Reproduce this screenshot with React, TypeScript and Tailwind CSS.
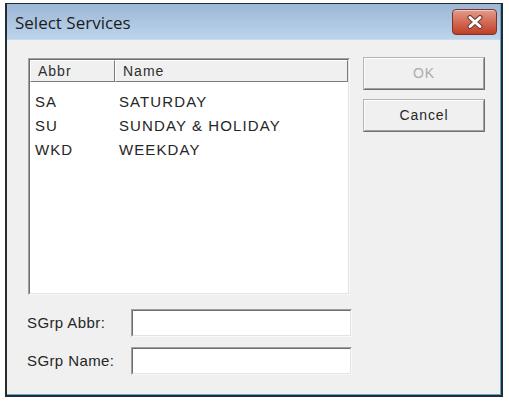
import React from 'react';

type Service = { abbr: string; name: string };

const services: Service[] = [
  { abbr: 'SA', name: 'SATURDAY' },
  { abbr: 'SU', name: 'SUNDAY & HOLIDAY' },
  { abbr: 'WKD', name: 'WEEKDAY' },
];

const classicFont = { fontFamily: '"Liberation Sans", Arial, sans-serif' };

function CloseGlyph() {
  return (
    <svg width="18" height="14" viewBox="0 0 18 14">
      <path d="M4 2.5 L14 11.5 M14 2.5 L4 11.5" stroke="#6b3a33" strokeWidth="5" strokeLinecap="round" />
      <path d="M4 2.5 L14 11.5 M14 2.5 L4 11.5" stroke="#ffffff" strokeWidth="3" strokeLinecap="round" />
    </svg>
  );
}

function DialogButton({ label, disabled }: { label: string; disabled?: boolean }) {
  return (
    <div className="w-[122px] h-[33px] border border-t-[#b4b4b4] border-l-[#b4b4b4] border-r-[#707070] border-b-[#707070] bg-[#f0f0f0]">
      <div className="w-full h-full border border-t-white border-l-white border-r-[#a0a0a0] border-b-[#a0a0a0] flex items-center justify-center">
        <span className={`text-[14px] tracking-[0.9px] ${disabled ? 'text-[#ababab]' : 'text-[#262626]'}`}>{label}</span>
      </div>
    </div>
  );
}

function TextField() {
  return (
    <div className="w-[221px] h-[28px] border border-t-[#a0a0a0] border-l-[#a0a0a0] border-r-[#f8f8f8] border-b-[#f8f8f8]">
      <div className="w-full h-full bg-white border border-t-[#6e6e6e] border-l-[#6e6e6e] border-r-[#e3e3e3] border-b-[#e3e3e3]" />
    </div>
  );
}

export default function App() {
  return (
    <div className="w-[509px] h-[403px] bg-white pt-[3px] pl-[5px]" style={classicFont}>
      <div className="w-[498px] h-[394px] border-t border-l-2 border-r-2 border-b-2 border-[#262b30]">
        <div className="w-full h-full flex flex-col border-r border-b border-[#58a9cc]">
          {/* title bar */}
          <div className="h-[36px] flex items-start justify-between pr-[3px] bg-gradient-to-b from-[#9bb7d6] to-[#bdd4ec] border-b border-[#c9dbee]">
            <span
              className="pl-[8px] pt-[8px] text-[17px] leading-[21px] text-[#1c1c1c]"
              style={{ fontFamily: '"Open Sans", "Noto Sans", sans-serif' }}
            >
              Select Services
            </span>
            <div className="mt-[5px] w-[45px] h-[26px] rounded-[4px] border border-[#7d3428] bg-gradient-to-b from-[#e39b8d] via-[#d26a55] to-[#c03d26] flex items-center justify-center shadow-[inset_0_1px_0_rgba(255,255,255,0.45)]">
              <CloseGlyph />
            </div>
          </div>

          {/* dialog body */}
          <div className="flex-1 bg-[#f0f0f0] flex gap-[11px] pl-[21px] pt-[18px]">
            <div className="flex flex-col">
              <div className="w-[322px] h-[237px] border border-t-[#a0a0a0] border-l-[#a0a0a0] border-r-[#f8f8f8] border-b-[#f8f8f8]">
                <div className="w-full h-full bg-white border border-t-[#6e6e6e] border-l-[#6e6e6e] border-r-[#e3e3e3] border-b-[#e3e3e3] flex flex-col">
                  <div className="h-[22px] flex bg-[#f0f0f0] text-[14px] tracking-[1px] text-[#2e2e2e]">
                    <div className="w-[85px] border-r border-b border-r-[#7a7a7a] border-b-[#7a7a7a] border-t border-l border-t-white border-l-white pl-[7px] flex items-center">
                      Abbr
                    </div>
                    <div className="flex-1 border-r border-b border-r-[#7a7a7a] border-b-[#7a7a7a] border-t border-l border-t-white border-l-white pl-[7px] flex items-center">
                      Name
                    </div>
                  </div>
                  <div className="pt-[8px] text-[15px] tracking-[1.1px] text-[#262626]">
                    {services.map((s) => (
                      <div key={s.abbr} className="h-[24px] flex items-center">
                        <span className="w-[89px] pl-[5px]">{s.abbr}</span>
                        <span>{s.name}</span>
                      </div>
                    ))}
                  </div>
                </div>
              </div>

              <div className="mt-[14px] flex flex-col gap-[10px] text-[15px] tracking-[0.4px] text-[#262626]">
                <div className="flex items-center">
                  <span className="w-[104px] -ml-[1px]">SGrp Abbr:</span>
                  <TextField />
                </div>
                <div className="flex items-center">
                  <span className="w-[104px] -ml-[1px]">SGrp Name:</span>
                  <TextField />
                </div>
              </div>
            </div>

            <div className="flex flex-col gap-[9px] -mt-[1px]">
              <DialogButton label="OK" disabled />
              <DialogButton label="Cancel" />
            </div>
          </div>
        </div>
      </div>
    </div>
  );
}
